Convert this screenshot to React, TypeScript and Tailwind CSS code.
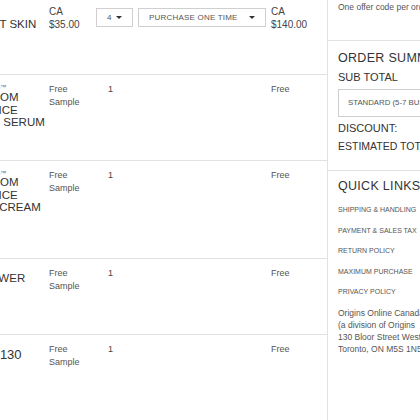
import React from "react";

const font = { fontFamily: '"Liberation Sans", Arial, sans-serif' };

function Sel({ w, label }: { w: string; label: string }) {
  return (
    <div className={`${w} h-[19px] border border-[#cfcfcf] flex items-center justify-between px-[10px] text-[8px] text-[#555] tracking-[0.2px]`}>
      <span>{label}</span>
      <span className="w-0 h-0 border-l-[3px] border-r-[3px] border-t-[3px] border-l-transparent border-r-transparent border-t-[#333]" />
    </div>
  );
}

function FreeRow({ h, name, last }: { h: string; name: React.ReactNode; last?: boolean }) {
  return (
    <div className={`${h} flex pt-[8px] ${last ? "" : "border-b border-[#e2e2e2]"}`}>
      <div className="w-[49px] overflow-hidden shrink-0">{name}</div>
      <div className="w-[59px] shrink-0 text-[9px] leading-[12.5px] text-[#555]">
        <div>Free</div>
        <div>Sample</div>
      </div>
      <div className="w-[163px] shrink-0 text-[9px] leading-[12.5px] text-[#444]">1</div>
      <div className="text-[9px] leading-[12.5px] text-[#555]">Free</div>
    </div>
  );
}

export default function App() {
  return (
    <div className="w-[420px] h-[420px] overflow-hidden flex bg-white text-[#333]" style={font}>
      <div className="w-[328px] shrink-0 border-r border-[#e2e2e2] h-[420px]">
        {/* row 1 */}
        <div className="h-[75px] flex pt-[5px] border-b border-[#e2e2e2]">
          <div className="w-[49px] overflow-hidden shrink-0 pt-[11px]">
            <div className="whitespace-nowrap -ml-[37px] text-[11.5px]">BRIGHT SKIN</div>
          </div>
          <div className="w-[47px] shrink-0 text-[10px] leading-[13px] text-[#444]">
            <div>CA</div>
            <div>$35.00</div>
          </div>
          <div className="w-[42px] shrink-0 pt-[3px]">
            <Sel w="w-[37px]" label="4" />
          </div>
          <div className="w-[133px] shrink-0 pt-[3px]">
            <Sel w="w-[128px]" label="PURCHASE ONE TIME" />
          </div>
          <div className="text-[10px] leading-[13px] text-[#444]">
            <div>CA</div>
            <div>$140.00</div>
          </div>
        </div>
        <FreeRow
          h="h-[86px]"
          name={
            <div className="whitespace-nowrap text-[11.5px] leading-[12.5px] text-[#333]">
              <div className="-ml-[25px] text-[6px] leading-[8px] text-[#666]">ORIGINS™</div>
              <div className="-ml-[51px]">MUSHROOM</div>
              <div className="-ml-[59px]">RELIEF JUICE</div>
              <div className="-ml-[30px]">FACE SERUM</div>
            </div>
          }
        />
        <FreeRow
          h="h-[98px]"
          name={
            <div className="whitespace-nowrap text-[11.5px] leading-[12.5px] text-[#333] pt-[1px]">
              <div className="-ml-[25px] text-[6px] leading-[6px] text-[#666]">ORIGINS™</div>
              <div className="-ml-[51px]">MUSHROOM</div>
              <div className="-ml-[59px]">RELIEF JUICE</div>
              <div className="-ml-[34px]">FACE CREAM</div>
            </div>
          }
        />
        <FreeRow
          h="h-[76px]"
          name={
            <div className="whitespace-nowrap text-[11.5px] leading-[12.5px] text-[#333] pt-[5px]">
              <div className="-ml-[24px]">FLOWER</div>
            </div>
          }
        />
        <FreeRow
          h="h-[86px]"
          last
          name={
            <div className="whitespace-nowrap text-[13px] leading-[16px] text-[#333] pt-[4px]">
              <div className="-ml-[29px]">SPF 130</div>
            </div>
          }
        />
      </div>
      <div className="flex-1 min-w-0 overflow-hidden">
        <div className="h-[41px] border-b border-[#e2e2e2] pl-[10px] pt-[1px] text-[8.5px] text-[#555] whitespace-nowrap">
          One offer code per order
        </div>
        <div className="h-[130px] border-b border-[#e2e2e2] pl-[10px] pt-[8px] whitespace-nowrap">
          <div className="text-[12.5px] leading-[18px] tracking-[0.3px]">ORDER SUMMARY</div>
          <div className="text-[11px] leading-[16px] mt-[2px]">SUB TOTAL</div>
          <div className="mt-[4px] h-[28px] border border-[#cfcfcf] flex items-center pl-[9px] text-[7.8px] text-[#555] w-[120px]">
            STANDARD (5-7 BUSINESS DAYS)
          </div>
          <div className="text-[11px] leading-[16px] mt-[3px]">DISCOUNT:</div>
          <div className="text-[10.5px] leading-[16px] mt-[2px]">ESTIMATED TOTAL</div>
        </div>
        <div className="pl-[10px] pt-[6px] whitespace-nowrap">
          <div className="text-[12.5px] leading-[18px] tracking-[0.3px]">QUICK LINKS</div>
          <div className="mt-[11px] flex flex-col gap-[12px] text-[7px] leading-[8.5px] text-[#555]">
            <div>SHIPPING &amp; HANDLING</div>
            <div>PAYMENT &amp; SALES TAX</div>
            <div>RETURN POLICY</div>
            <div>MAXIMUM PURCHASE</div>
            <div>PRIVACY POLICY</div>
          </div>
          <div className="mt-[10px] text-[8.5px] leading-[12px] text-[#555]">
            <div>Origins Online Canada</div>
            <div>(a division of Origins</div>
            <div>130 Bloor Street West</div>
            <div>Toronto, ON M5S 1N5</div>
          </div>
        </div>
      </div>
    </div>
  );
}
